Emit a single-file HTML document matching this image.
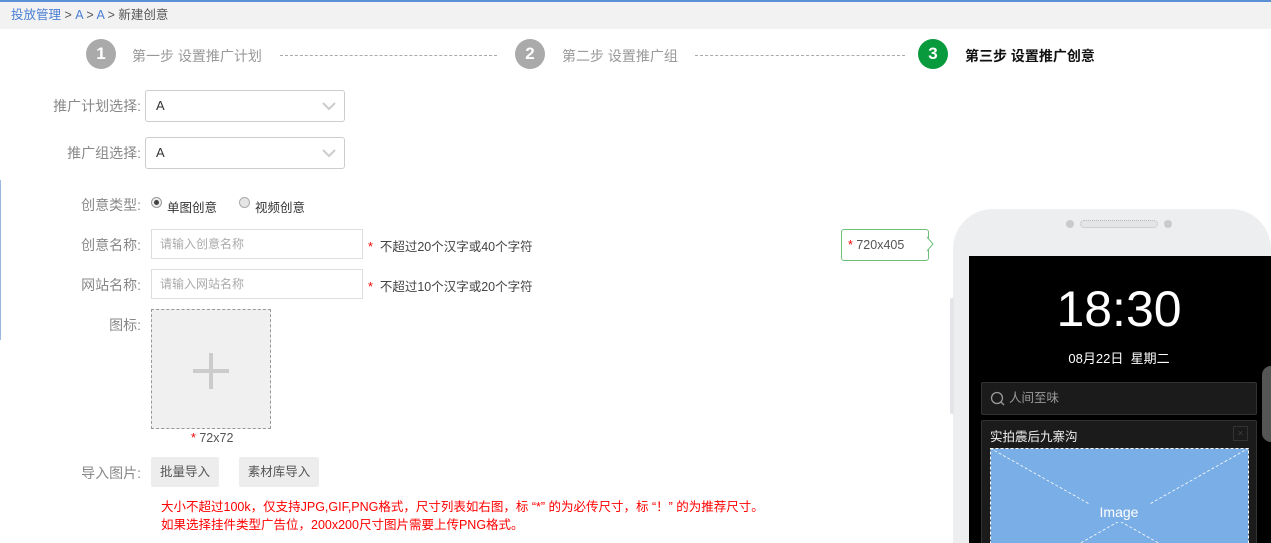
<!DOCTYPE html><html><head><meta charset="utf-8"><style>
*{margin:0;padding:0;box-sizing:border-box}
html,body{width:1271px;height:543px;overflow:hidden}
body{background:#fff;font-family:"Liberation Sans","Noto Sans CJK SC",sans-serif;font-size:13px;color:#666;position:relative}
.a{position:absolute}
.lbl{position:absolute;text-align:right;width:120px;color:#888;font-size:14px}
.sel{position:absolute;border:1px solid #ccc;border-radius:3px;background:#fff;color:#333;padding-left:10px;line-height:30px;font-size:13px}
.inp{position:absolute;border:1px solid #ddd;background:#fff;color:#aaa;padding-left:8px;font-size:12px;line-height:28px}
.circ{position:absolute;width:30px;height:30px;border-radius:50%;color:#fff;font-weight:bold;font-size:17px;text-align:center;line-height:30px}
.dash{position:absolute;border-top:1px dashed #aaa;height:0}
.btn{position:absolute;background:#ededed;border-radius:2px;color:#555;text-align:center;line-height:30px;font-size:12.5px}
</style></head><body>
<div class="a" style="left:0;top:0;width:1271px;height:2px;background:#5b8fd6"></div>
<div class="a" style="left:0;top:2px;width:1271px;height:27px;background:#f2f2f2;line-height:27px;padding-left:11px;font-size:12.5px;color:#555"><span style="color:#4a7fd6">投放管理</span> &gt; <span style="color:#4a7fd6">A</span> &gt; <span style="color:#4a7fd6">A</span> &gt; 新建创意</div>
<div class="a" style="left:0;top:180px;width:1px;height:160px;background:#9ab8e0"></div>
<div class="circ" style="left:86px;top:39px;background:#aaa">1</div>
<div class="a" style="left:132px;top:46px;color:#999;font-size:14px">第一步 设置推广计划</div>
<div class="dash" style="left:280px;top:55px;width:217px"></div>
<div class="circ" style="left:515px;top:39px;background:#aaa">2</div>
<div class="a" style="left:562px;top:46px;color:#999;font-size:14px">第二步 设置推广组</div>
<div class="dash" style="left:695px;top:55px;width:210px"></div>
<div class="circ" style="left:918px;top:39px;background:#0a9a3e">3</div>
<div class="a" style="left:965px;top:46px;color:#111;font-weight:bold;font-size:14px">第三步 设置推广创意</div>

<div class="lbl" style="left:21px;top:96px">推广计划选择:</div>
<div class="sel" style="left:145px;top:90px;width:200px;height:32px">A</div>
<div class="lbl" style="left:21px;top:143px">推广组选择:</div>
<div class="sel" style="left:145px;top:137px;width:200px;height:32px">A</div>
<svg class="a" style="left:322px;top:101px" width="14" height="10"><path d="M1 2l6 6 6-6" stroke="#ccc" stroke-width="2" fill="none"/></svg>
<svg class="a" style="left:322px;top:148px" width="14" height="10"><path d="M1 2l6 6 6-6" stroke="#ccc" stroke-width="2" fill="none"/></svg>

<div class="lbl" style="left:21px;top:195px">创意类型:</div>
<div class="a" style="left:151px;top:197px;width:11px;height:11px;border:1px solid #999;border-radius:50%;background:#eee"><div style="margin:2px;width:5px;height:5px;border-radius:50%;background:#444"></div></div>
<div class="a" style="left:167px;top:197px;color:#333;font-size:12.5px">单图创意</div>
<div class="a" style="left:239px;top:197px;width:11px;height:11px;border:1px solid #aaa;border-radius:50%;background:#e6e6e6"></div>
<div class="a" style="left:255px;top:197px;color:#333;font-size:12.5px">视频创意</div>

<div class="lbl" style="left:21px;top:235px">创意名称:</div>
<div class="inp" style="left:151px;top:229px;width:212px;height:30px">请输入创意名称</div>
<div class="a" style="left:368px;top:236px;font-size:12.5px;color:#444"><span style="color:#e00">*</span>&nbsp; 不超过20个汉字或40个字符</div>
<div class="lbl" style="left:21px;top:275px">网站名称:</div>
<div class="inp" style="left:151px;top:269px;width:212px;height:30px">请输入网站名称</div>
<div class="a" style="left:368px;top:276px;font-size:12.5px;color:#444"><span style="color:#e00">*</span>&nbsp; 不超过10个汉字或20个字符</div>

<div class="lbl" style="left:21px;top:315px">图标:</div>
<div class="a" style="left:151px;top:309px;width:120px;height:120px;border:1px dashed #999;background:#f0f0f0"></div>
<div class="a" style="left:193px;top:369px;width:36px;height:4px;background:#ccc"></div>
<div class="a" style="left:209px;top:353px;width:4px;height:36px;background:#ccc"></div>
<div class="a" style="left:191px;top:431px;font-size:12.5px;color:#555"><span style="color:#e00">*</span> 72x72</div>

<div class="lbl" style="left:21px;top:463px">导入图片:</div>
<div class="btn" style="left:151px;top:457px;width:68px;height:30px">批量导入</div>
<div class="btn" style="left:239px;top:457px;width:80px;height:30px">素材库导入</div>
<div class="a" style="left:161px;top:498px;color:#f00;font-size:12.5px;line-height:18px">大小不超过100k，仅支持JPG,GIF,PNG格式，尺寸列表如右图，标 “*” 的为必传尺寸，标 “！” 的为推荐尺寸。<br>如果选择挂件类型广告位，200x200尺寸图片需要上传PNG格式。</div>

<div class="a" style="left:841px;top:229px;width:88px;height:32px;border:1px solid #6cc07a;border-radius:3px;line-height:30px;padding-left:6px;font-size:12.5px;color:#555"><span style="color:#e00">*</span> 720x405</div>
<svg class="a" style="left:927px;top:236px" width="8" height="16"><path d="M0 1l6 7-6 7" stroke="#6cc07a" fill="#fff"/></svg>

<div class="a" style="left:953px;top:209px;width:318px;height:334px;border-radius:40px 40px 0 0;background:#eceef0"></div>
<div class="a" style="left:950px;top:298px;width:4px;height:116px;background:#e3e5e8;border-radius:2px"></div>
<div class="a" style="left:1066px;top:220px;width:8px;height:8px;border-radius:50%;background:#c8cacc"></div>
<div class="a" style="left:1164px;top:220px;width:8px;height:8px;border-radius:50%;background:#c8cacc"></div>
<div class="a" style="left:1080px;top:220px;width:78px;height:8px;border-radius:4px;background:#e3e5e7;border:1px dotted #bbb"></div>
<div class="a" style="left:969px;top:256px;width:302px;height:287px;background:#000"></div>
<div class="a" style="left:969px;top:277px;width:300px;text-align:center;color:#fff;font-size:50px;line-height:64px;font-family:'Liberation Sans',sans-serif">18:30</div>
<div class="a" style="left:969px;top:348px;width:300px;text-align:center;color:#fff;font-size:13px">08月22日&nbsp; 星期二</div>
<div class="a" style="left:981px;top:382px;width:276px;height:33px;background:#1b1b1b;border:1px solid #333;border-radius:2px;color:#999;font-size:12.5px;line-height:31px;padding-left:27px">人间至味</div>
<svg class="a" style="left:990px;top:391px" width="16" height="16"><circle cx="7" cy="7" r="5.5" stroke="#999" stroke-width="1.3" fill="none"/><path d="M11 11l3 3" stroke="#999" stroke-width="1.3"/></svg>
<div class="a" style="left:981px;top:420px;width:276px;height:123px;background:#1b1b1b;border:1px solid #333;border-bottom:none;border-radius:2px 2px 0 0"></div>
<div class="a" style="left:990px;top:426px;color:#eee;font-size:12.5px">实拍震后九寨沟</div>
<div class="a" style="left:1233px;top:426px;width:15px;height:15px;border:1px solid #333;color:#444;font-size:9px;text-align:center;line-height:13px">×</div>
<svg class="a" style="left:990px;top:448px" width="259" height="95"><rect x="0.5" y="0.5" width="258" height="145" fill="#7aaee6" stroke="#fff" stroke-dasharray="3 2"/><path d="M0 0L259 146M259 0L0 146" stroke="#fff" stroke-dasharray="3 2" stroke-width="0.8"/><rect x="100" y="54" width="60" height="20" fill="#7aaee6"/><text x="129" y="69" fill="#fff" font-size="14" text-anchor="middle" font-family="Liberation Sans">Image</text></svg>
<div class="a" style="left:1262px;top:366px;width:9px;height:76px;border-radius:10px 0 0 10px;background:#555"></div>
</body></html>
